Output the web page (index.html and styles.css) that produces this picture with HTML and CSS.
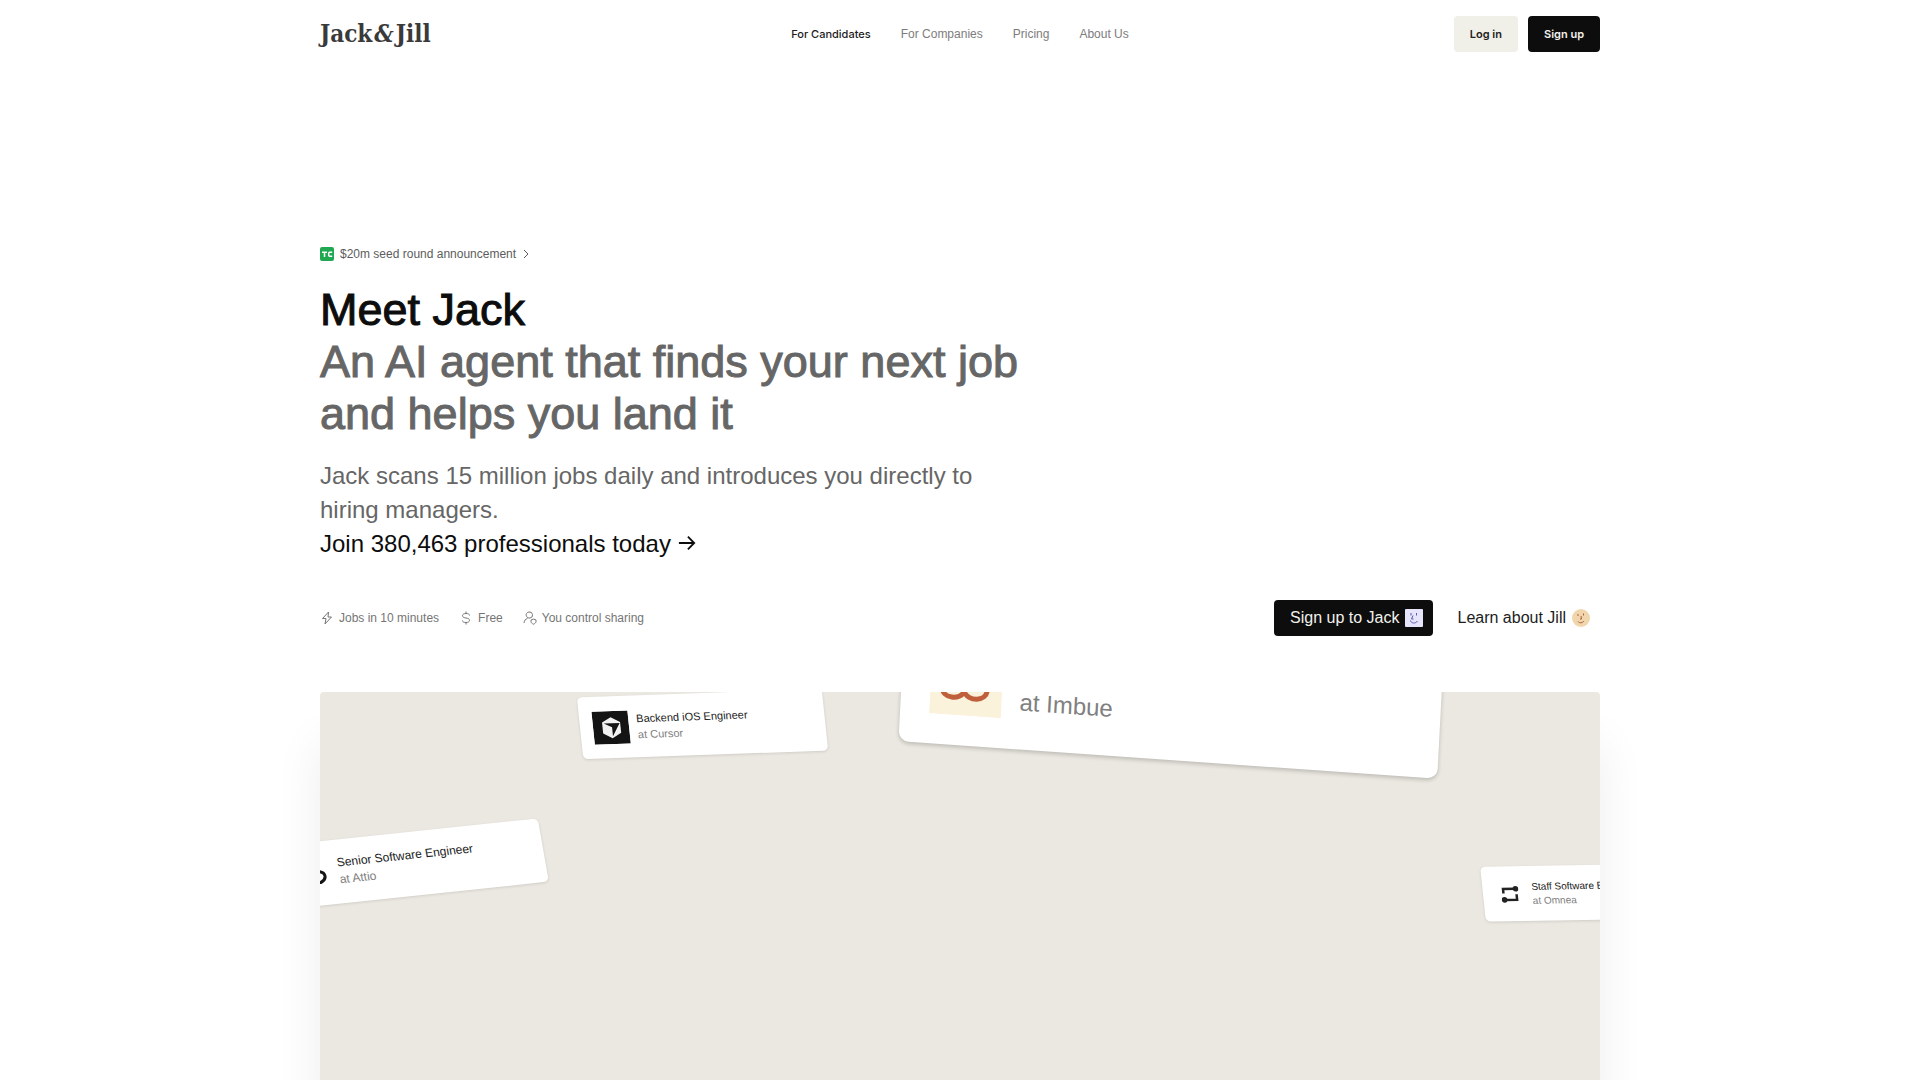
FILE: index.html
```
<!DOCTYPE html>
<html lang="en">
<head>
  <meta charset="UTF-8" />
  <meta name="viewport" content="width=device-width, initial-scale=1.0" />
  <title>Jack &amp; Jill</title>
  <link rel="stylesheet" href="styles.css">
</head>
<body>

  <header class="site-header">
    <a class="logo" href="#">Jack<em>&amp;</em>Jill</a>
    <nav class="main-nav">
      <a class="active" href="#">For Candidates</a>
      <a href="#">For Companies</a>
      <a href="#">Pricing</a>
      <a href="#">About Us</a>
    </nav>
    <div class="auth-buttons">
      <button class="btn btn-light">Log in</button>
      <button class="btn btn-dark">Sign up</button>
    </div>
  </header>

  <main class="hero">
    <a class="announcement" href="#">
      <svg class="tc" viewBox="0 0 14 14">
        <rect width="14" height="14" rx="2" fill="#1fa851"/>
        <path d="M2 5.200h5M4.500 5v5M12.200 5.200H9.700a1 1 0 0 0-1 1v2a1 1 0 0 0 1 1h2.500" fill="none" stroke="#fff" stroke-width="1.500"/>
      </svg>
      <span>$20m seed round announcement</span>
      <svg class="chevron" viewBox="0 0 8 10"><path d="M2 1l4 4-4 4" fill="none" stroke="currentColor"/></svg>
    </a>

    <h1>Meet Jack <span>An AI agent that finds your next job and helps you land it</span></h1>

    <div class="intro">
      <p>Jack scans 15 million jobs daily and introduces you directly to hiring managers.</p>
      <a href="#">Join 380,463 professionals today
        <svg viewBox="0 0 20 20"><path d="M1 10h17M11 3l7 7-7 7" fill="none" stroke="currentColor" stroke-width="2"/></svg>
      </a>
    </div>

    <div class="hero-bar">
      <ul class="perks">
        <li>
          <svg viewBox="0 0 14 14"><path d="M8.500 1L2.500 7.500H6L5 13l6.500-7H8z" fill="none" stroke="currentColor" stroke-linejoin="round"/></svg>
          Jobs in 10 minutes
        </li>
        <li>
          <svg viewBox="0 0 14 14"><path d="M10.500 4.500C10.500 3 9 2.500 7 2.500S3.500 3.200 3.500 4.700 5 6.700 7 7s3.500.8 3.500 2.300S9 11.500 7 11.500 3.500 11 3.500 9.500M7 .5v2M7 11.500v2" fill="none" stroke="currentColor"/></svg>
          Free
        </li>
        <li>
          <svg viewBox="0 0 14 14"><path d="M1 12c.2-2.500 1.500-4 3.500-4.500M6 1a3 3 0 0 1 1 6C4 7.500 2.500 4.500 3.500 2.600A3 3 0 0 1 6 1zM10.500 8l2.500 1v1.500c0 1.300-1 2-2.500 2.700C9 12.500 8 11.800 8 10.500V9z" fill="none" stroke="currentColor" stroke-linejoin="round"/></svg>
          You control sharing
        </li>
      </ul>
      <div class="cta">
        <button class="btn btn-dark btn-lg">
          Sign up to Jack
          <svg viewBox="0 0 18 18"><rect width="18" height="18" rx="1" fill="#e6e5fb"/><path d="M6 4v2.500M11.500 4v2.500M8 6.500L6.500 10h2M5.500 11.500c.5 3 5 3.500 7 .5" fill="none" stroke="#5b55b8"/></svg>
        </button>
        <button class="btn btn-plain btn-lg">
          Learn about Jill
          <svg viewBox="0 0 18 18"><circle cx="9" cy="9" r="9" fill="#f1d6ad"/><path d="M6 5v2M11.500 4.500v2M9 7l.5 3H8M6 12.500c1.500 2 4.500 1.500 6-.5" fill="none" stroke="#a8603f"/></svg>
        </button>
      </div>
    </div>

    <section class="stage">
      <article class="job job-attio">
        <svg viewBox="0 0 30 30"><path d="M4 26L15 13h8q5 1 5 5t-5 6h-6l-4-5" fill="none" stroke="#151515" stroke-width="3" stroke-linejoin="round"/></svg>
        <div>
          <h2>Senior Software Engineer</h2>
          <p>at Attio</p>
        </div>
      </article>

      <article class="job job-cursor">
        <svg viewBox="0 0 36 33"><rect width="36" height="33" fill="#141414"/><path d="M18.500 6l9 5v11l-9 5-9-5V11z" fill="#f2f2f2"/><path d="M11 12h16l-8 13v-9z" fill="#141414"/></svg>
        <div>
          <h2>Backend iOS Engineer</h2>
          <p>at Cursor</p>
        </div>
      </article>

      <article class="job job-imbue">
        <svg viewBox="0 0 72 72"><rect width="72" height="72" fill="#fbf2dc"/><path d="M34 48c-3-12-22-14-22-3 0 12 19 12 22 3 4 10 23 9 23-3 0-11-20-9-23 3z" fill="none" stroke="#bf5f3c" stroke-width="5"/></svg>
        <p>at Imbue</p>
      </article>

      <article class="job job-omnea">
        <svg viewBox="0 0 18 18"><path d="M2.500 8V3.500H15M15.500 9v5.500H3" fill="none" stroke="#222" stroke-width="2.500"/><circle cx="15" cy="3.500" r="2.800" fill="#222"/><circle cx="3" cy="14.500" r="2.800" fill="#222"/></svg>
        <div>
          <h2>Staff Software Engineer</h2>
          <p>at Omnea</p>
        </div>
      </article>
    </section>
  </main>

</body>
</html>
```
FILE: styles.css
```
* {
  box-sizing: border-box;
}

body {
  margin: 0;
  min-height: 100vh;
  display: flex;
  flex-direction: column;
  background: #fff;
  color: #0d0d0d;
  font-family: "Liberation Sans", Arial, sans-serif;
  overflow-x: hidden;
}

a {
  color: inherit;
  text-decoration: none;
}

.site-header,
.hero {
  width: 100%;
  max-width: 1328px;
  margin: 0 auto;
  padding: 0 24px;
}

/* header */
.site-header {
  display: grid;
  grid-template-columns: 1fr auto 1fr;
  align-items: center;
  padding-top: 16px;
  padding-bottom: 16px;
}

.logo {
  font-family: "DejaVu Serif Condensed", "DejaVu Serif", serif;
  font-size: 24px;
  line-height: 36px;
  font-weight: bold;
  color: #3a3a3a;
}

.logo em {
  margin: 0 2px;
}

.main-nav {
  display: flex;
  gap: 30px;
  align-items: center;
  font-size: 12px;
  color: #7d7d7d;
}

.main-nav .active {
  color: #1c1c1c;
  font-family: Inter, sans-serif;
  font-size: 11px;
  font-weight: 500;
}

.auth-buttons {
  display: flex;
  justify-content: flex-end;
  gap: 10px;
}

.btn {
  display: flex;
  align-items: center;
  height: 36px;
  padding: 0 16px;
  border: 0;
  border-radius: 4px;
  font-family: Inter, sans-serif;
  font-size: 11px;
  font-weight: 600;
  cursor: pointer;
}

.btn-light {
  background: #f0efe8;
  color: #222;
}

.btn-dark {
  background: #0d0d0d;
  color: #f2f1ec;
}

.btn-plain {
  background: none;
  color: #1c1c1c;
}

.btn-lg {
  gap: 6px;
  padding: 0 10px 0 16px;
  font-family: "Liberation Sans", Arial, sans-serif;
  font-size: 16px;
  font-weight: 400;
}

.btn-lg svg {
  width: 18px;
  height: 18px;
}

/* hero */
.hero {
  flex: 1;
  display: flex;
  flex-direction: column;
  padding-top: 176px;
}

.announcement {
  display: flex;
  align-items: center;
  gap: 6px;
  font-size: 12px;
  line-height: 20px;
  color: #5c5c5c;
}

.tc {
  width: 14px;
  height: 14px;
}

.chevron {
  width: 8px;
  height: 10px;
}

h1 {
  max-width: 740px;
  margin: 20px 0 0;
  font-size: 45px;
  line-height: 52px;
  font-weight: 400;
  -webkit-text-stroke: 1px currentColor;
}

h1 span {
  display: block;
  color: #666;
}

.intro {
  max-width: 680px;
  margin-top: 19px;
  font-size: 24px;
  line-height: 34px;
}

.intro p {
  margin: 0;
  color: #666;
}

.intro svg {
  width: 18px;
  height: 18px;
}

.hero-bar {
  display: flex;
  justify-content: space-between;
  align-items: center;
  margin-top: 39px;
}

.perks {
  display: flex;
  gap: 20px;
  margin: 0;
  padding: 0;
  list-style: none;
  font-size: 12px;
  color: #757575;
}

.perks li {
  display: flex;
  align-items: center;
  gap: 5px;
}

.perks svg {
  width: 14px;
  height: 14px;
}

.cta {
  display: flex;
  gap: 8px;
}

/* scattered job cards */
.stage {
  position: relative;
  flex: 1;
  min-height: 388px;
  margin-top: 56px;
  border-radius: 4px 4px 0 0;
  background: #ebe8e1;
  box-shadow: 0 50px 50px rgba(0, 0, 0, 0.07);
  overflow: hidden;
}

.job {
  position: absolute;
  display: flex;
  align-items: center;
  gap: 8px;
  padding: 0 16px;
  border-radius: 5px;
  background: #fff;
  box-shadow: 0 1px 3px rgba(0, 0, 0, 0.12);
  white-space: nowrap;
}

.job svg {
  flex: none;
}

.job h2,
.job p {
  margin: 0;
  font-size: inherit;
  font-weight: 400;
}

.job h2 {
  color: #222;
}

.job p {
  color: #808080;
}

.job-attio {
  left: -44px;
  top: 140px;
  width: 268px;
  height: 64px;
  gap: 12px;
  padding: 0 20px;
  font-size: 12px;
  line-height: 17px;
  transform: rotate(-6deg) skewX(4deg);
}

.job-attio svg {
  width: 30px;
  height: 30px;
}

.job-cursor {
  left: 260px;
  top: 1px;
  width: 245px;
  height: 62px;
  padding: 0 13px;
  font-size: 11px;
  line-height: 16px;
  transform: rotate(-2deg) skewX(4deg);
}

.job-cursor svg {
  width: 36px;
  height: 33px;
}

.job-imbue {
  left: 582px;
  top: -92px;
  width: 540px;
  height: 160px;
  align-items: flex-end;
  gap: 18px;
  padding: 0 29px 30px;
  border-radius: 10px;
  box-shadow: 0 2px 4px rgba(0, 0, 0, 0.2);
  font-size: 24px;
  line-height: 34px;
  transform: rotate(4deg) skewX(1deg);
}

.job-imbue svg {
  width: 72px;
  height: 72px;
}

.job-omnea {
  right: -84px;
  top: 173px;
  width: 201px;
  height: 55px;
  gap: 13px;
  padding: 0 18px;
  font-size: 10px;
  line-height: 14px;
  transform: rotate(-1deg) skewX(5deg);
}

.job-omnea svg {
  width: 18px;
  height: 18px;
}
```
